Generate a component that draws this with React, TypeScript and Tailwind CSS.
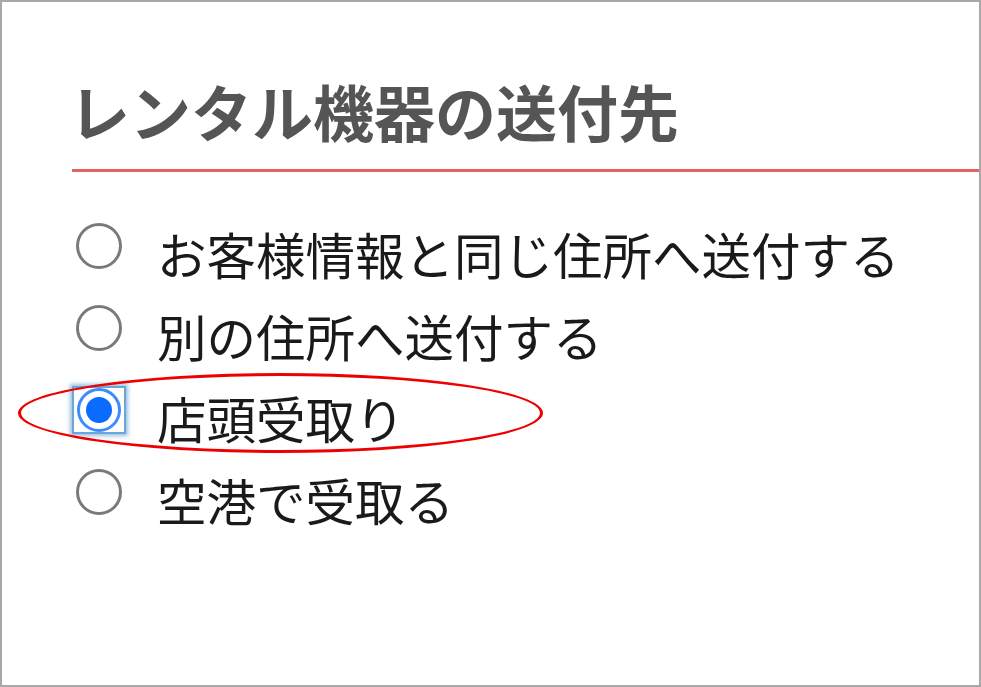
import React from "react";

const jp = { fontFamily: '"Noto Sans CJK JP", "Noto Sans", sans-serif' };

function Radio({ checked }: { checked?: boolean }) {
  if (checked) {
    return (
      <div className="w-[54px] h-[48px] -mx-[4px] flex items-center justify-center bg-white border-2 border-[#6aa6d8] shadow-[0_0_4px_2px_rgba(70,140,200,0.55)]">
        <div className="w-[44px] h-[44px] rounded-full border-[3px] border-[#3d8bff] flex items-center justify-center">
          <div className="w-[36px] h-[36px] rounded-full border-[3px] border-white flex items-center justify-center">
            <div className="w-[26px] h-[26px] rounded-full bg-[#0a6cff]" />
          </div>
        </div>
      </div>
    );
  }
  return <div className="w-[46px] h-[46px] rounded-full border-[3px] border-[#7a7a7a] bg-white" />;
}

const options = [
  { label: "お客様情報と同じ住所へ送付する", checked: false },
  { label: "別の住所へ送付する", checked: false },
  { label: "店頭受取り", checked: true },
  { label: "空港で受取る", checked: false },
];

export default function App() {
  return (
    <div className="w-[981px] h-[687px] bg-white border-2 border-[#a8a8a8] overflow-hidden" style={jp}>
      <div className="pl-[70px] pt-[74px]">
        <div className="pb-[23px] border-b-[3px] border-[#e06262]">
          <h1 className="text-[61px] leading-[70px] font-bold text-[#555555] -ml-[3px]">
            レンタル機器の送付先
          </h1>
        </div>
      </div>
      <div className="pl-[74px] pt-[50px] flex flex-col gap-[34px]">
        {options.map((o) => (
          <div key={o.label} className="relative flex items-center h-[48px]">
            <div className="w-[46px] flex items-center justify-center">
              <Radio checked={o.checked} />
            </div>
            <span className="ml-[35px] text-[49.5px] leading-[48px] text-[#1a1a1a] font-normal translate-y-[8px]">
              {o.label}
            </span>
            {o.checked && (
              <div className="absolute left-[-58px] top-[-13px] w-[525px] h-[80px] rounded-[50%] border-[3px] border-[#ee0000] pointer-events-none" />
            )}
          </div>
        ))}
      </div>
    </div>
  );
}
